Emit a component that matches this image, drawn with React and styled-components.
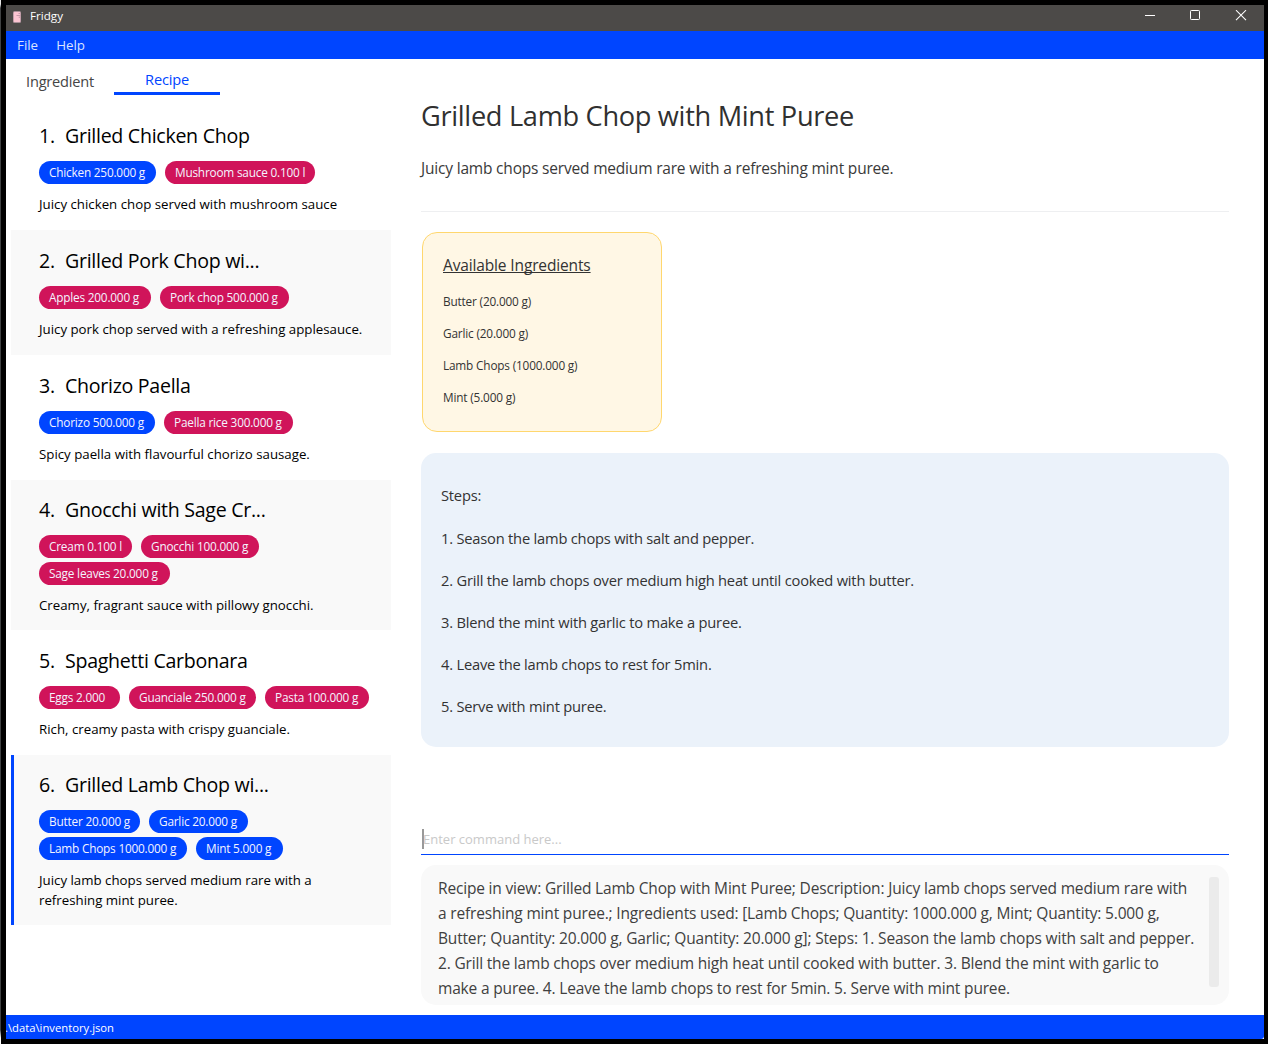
import React from 'react';
import styled, { createGlobalStyle, css } from 'styled-components';

const BLUE = '#0045ff';
const CRIMSON = '#d0145a';

const GlobalStyle = createGlobalStyle`
  *, *::before, *::after { box-sizing: border-box; }
  body { margin: 0; background: #000; }
  h1, h2, p, ul, ol { margin: 0; padding: 0; font-weight: 400; list-style: none; }
`;

const Desktop = styled.div`
  display: flex;
  width: 1268px;
  height: 1044px;
  padding: 5px 4px 5px 0;
  background: #000;
  overflow: hidden;
  font-family: 'Open Sans', 'Noto Sans', sans-serif;
`;

const EdgeStrip = styled.div`
  width: 1px;
  margin: -5px 5px -5px 0;
  flex: none;
  background: linear-gradient(#e6e6e6 0, #e6e6e6 4px, #3f4142 8px, #3f4142 1030px, #fff 1038px);
`;

const Window = styled.div`
  flex: 1;
  min-width: 0;
  display: flex;
  flex-direction: column;
  background: #fff;
`;

const TitleBar = styled.header`
  display: flex;
  align-items: flex-start;
  height: 26px;
  flex: none;
  padding-left: 7px;
  background: #4c4a48;
`;

const AppIcon = styled.svg`
  width: 8px;
  height: 12px;
  margin-top: 6px;
`;

const AppName = styled.span`
  flex: 1;
  margin-left: 9px;
  font-size: 11.65px;
  line-height: 22px;
  color: #fff;
`;

const Controls = styled.div`
  display: flex;
  gap: 34px;
  padding: 5px 17px 0 0;
`;

const ControlIcon = styled.svg`
  width: 12px;
  height: 12px;
  fill: none;
  stroke: #fff;
  stroke-width: 1;
`;

const MenuBar = styled.nav`
  display: flex;
  gap: 18px;
  height: 28px;
  flex: none;
  padding-left: 11px;
  background: ${BLUE};
`;

const MenuItem = styled.span`
  font-size: 13.35px;
  line-height: 28px;
  color: #d9e3ff;
`;

const Body = styled.main`
  flex: 1;
  min-height: 0;
  display: grid;
  grid-template-columns: 385px 1fr;
`;

const Sidebar = styled.aside`
  padding-left: 5px;
`;

const Tabs = styled.div`
  display: flex;
  height: 46px;
`;

const Tab = styled.div`
  height: 36px;
  font-size: 14.6px;
  letter-spacing: -0.2px;
  color: #454545;
  line-height: 45px;
  width: 103px;
  padding-left: 15px;
  ${({ $active }) => $active && css`
    width: 106px;
    padding-left: 0;
    text-align: center;
    line-height: 41px;
    color: ${BLUE};
    border-bottom: 3px solid ${BLUE};
  `}
`;

const RecipeRow = styled.li`
  width: 380px;
  height: ${({ $height }) => $height}px;
  padding: ${({ $tight }) => ($tight ? 18 : 19)}px 0 0 28px;
  background: ${({ $shaded }) => ($shaded ? '#f9f9f9' : '#fff')};
  ${({ $selected }) => $selected && css`
    padding-left: 25px;
    border-left: 3px solid ${BLUE};
  `}
`;

const RecipeHeading = styled.h2`
  display: flex;
  font-size: 19.6px;
  letter-spacing: -0.29px;
  line-height: 24px;
  color: #000;
  white-space: nowrap;
`;

const RecipeIndex = styled.span`
  width: 26px;
`;

const TagFlow = styled.div`
  display: flex;
  flex-wrap: wrap;
  gap: 4px 9px;
  width: 340px;
  margin-top: 13px;
`;

const Tag = styled.span`
  width: ${({ $width }) => $width}px;
  height: 23px;
  padding-left: 10px;
  border-radius: 12px;
  background: ${({ $owned }) => ($owned ? BLUE : CRIMSON)};
  color: #f4f4ff;
  font-size: 11.8px;
  letter-spacing: -0.2px;
  line-height: 23px;
  white-space: nowrap;
`;

const RecipeBlurb = styled.p`
  width: 330px;
  margin-top: 10px;
  font-size: 13.27px;
  line-height: 20px;
  color: #000;
  white-space: pre-line;
`;

const Detail = styled.section`
  display: flex;
  flex-direction: column;
  padding: 37px 35px 10px 30px;
`;

const DetailTitle = styled.h1`
  font-size: 27.2px;
  letter-spacing: -0.31px;
  line-height: 40px;
  color: #303030;
`;

const DetailText = styled.p`
  margin-top: 20px;
  padding-bottom: 31px;
  border-bottom: 1px solid #eeeff1;
  font-size: 15.5px;
  letter-spacing: -0.19px;
  line-height: 24px;
  color: #3a3a3a;
`;

const IngredientCard = styled.div`
  width: 240px;
  height: 200px;
  margin: 20px 0 0 1px;
  padding: 20px;
  border: 1px solid #ffd76e;
  border-radius: 15px;
  background: #fff7e5;
  color: #333;
`;

const CardTitle = styled.h2`
  margin-bottom: 8px;
  font-size: 15.5px;
  letter-spacing: -0.14px;
  line-height: 24px;
  text-decoration: underline;
  text-decoration-thickness: 1px;
  text-decoration-skip-ink: none;
  text-underline-offset: 1px;
`;

const IngredientItem = styled.li`
  font-size: 11.8px;
  letter-spacing: -0.17px;
  line-height: 32px;
`;

const StepsPanel = styled.div`
  height: 294px;
  margin-top: 21px;
  padding: 21px 20px;
  border-radius: 15px;
  background: #ebf2fa;
  color: #333;
  font-size: 14.7px;
  letter-spacing: -0.21px;
`;

const StepsTitle = styled.h2`
  font-size: inherit;
  line-height: 43px;
`;

const StepItem = styled.li`
  line-height: 42px;
`;

const CommandBox = styled.div`
  display: flex;
  align-items: center;
  height: 31px;
  margin-top: auto;
  padding-left: 1px;
  border-bottom: 1px solid ${BLUE};
`;

const Caret = styled.span`
  width: 2px;
  height: 20px;
  margin-right: -1px;
  background: #999;
`;

const Placeholder = styled.span`
  font-size: 13px;
  line-height: 20px;
  color: #c9c9c9;
`;

const ResultBox = styled.div`
  display: flex;
  justify-content: space-between;
  height: 140px;
  margin-top: 10px;
  padding: 11px 10px 0 17px;
  border-radius: 15px;
  background: #f9f9f9;
`;

const ResultText = styled.p`
  font-size: 15.5px;
  letter-spacing: -0.175px;
  line-height: 25px;
  color: #404040;
  white-space: pre;
`;

const ScrollThumb = styled.div`
  width: 10px;
  height: 110px;
  margin-top: 1px;
  border-radius: 3px;
  background: #ebebeb;
`;

const StatusBar = styled.footer`
  height: 24px;
  flex: none;
  overflow: hidden;
  background: ${BLUE};
  color: #fff;
  font-size: 11.25px;
  line-height: 25px;
  text-indent: -1px;
  border-bottom-right-radius: 3px;
`;

const recipes = [
  { name: 'Grilled Chicken Chop', height: 125, blurb: 'Juicy chicken chop served with mushroom sauce',
    tags: [['Chicken 250.000 g', 117, true], ['Mushroom sauce 0.100 l', 150]] },
  { name: 'Grilled Pork Chop wi...', height: 125, blurb: 'Juicy pork chop served with a refreshing applesauce.',
    tags: [['Apples 200.000 g', 112], ['Pork chop 500.000 g', 129]] },
  { name: 'Chorizo Paella', height: 125, blurb: 'Spicy paella with flavourful chorizo sausage.',
    tags: [['Chorizo 500.000 g', 116, true], ['Paella rice 300.000 g', 129]] },
  { name: 'Gnocchi with Sage Cr...', height: 150, tight: true, blurb: 'Creamy, fragrant sauce with pillowy gnocchi.',
    tags: [['Cream 0.100 l', 93], ['Gnocchi 100.000 g', 118], ['Sage leaves 20.000 g', 131]] },
  { name: 'Spaghetti Carbonara', height: 125, blurb: 'Rich, creamy pasta with crispy guanciale.',
    tags: [['Eggs 2.000', 81], ['Guanciale 250.000 g', 127], ['Pasta 100.000 g', 104]] },
  { name: 'Grilled Lamb Chop wi...', height: 170, tight: true, selected: true,
    blurb: 'Juicy lamb chops served medium rare with a\nrefreshing mint puree.',
    tags: [['Butter 20.000 g', 101, true], ['Garlic 20.000 g', 99, true], ['Lamb Chops 1000.000 g', 148, true], ['Mint 5.000 g', 87, true]] },
];

const available = ['Butter (20.000 g)', 'Garlic (20.000 g)', 'Lamb Chops (1000.000 g)', 'Mint (5.000 g)'];

const steps = [
  'Season the lamb chops with salt and pepper.',
  'Grill the lamb chops over medium high heat until cooked with butter.',
  'Blend the mint with garlic to make a puree.',
  'Leave the lamb chops to rest for 5min.',
  'Serve with mint puree.',
];

const result = [
  'Recipe in view: Grilled Lamb Chop with Mint Puree; Description: Juicy lamb chops served medium rare with',
  'a refreshing mint puree.; Ingredients used: [Lamb Chops; Quantity: 1000.000 g, Mint; Quantity: 5.000 g,',
  'Butter; Quantity: 20.000 g, Garlic; Quantity: 20.000 g]; Steps: 1. Season the lamb chops with salt and pepper.',
  '2. Grill the lamb chops over medium high heat until cooked with butter. 3. Blend the mint with garlic to',
  'make a puree. 4. Leave the lamb chops to rest for 5min. 5. Serve with mint puree.',
].join('\n');

function FridgeIcon() {
  return (
    <AppIcon viewBox="0 0 8 12">
      <rect x="0" y="0" width="8" height="12" rx="1.5" fill="#a98f98" />
      <rect x="0.7" y="1" width="6.6" height="10" rx="0.8" fill="#fbc4d2" />
      <path d="M3.5 4.5h3.8M5.5 2.5h1.5M6.3 5.5v1.5" stroke="#b98fa0" strokeWidth="0.8" fill="none" />
    </AppIcon>
  );
}

function WindowControls() {
  return (
    <Controls>
      <ControlIcon viewBox="0 0 12 12"><path d="M2 5.5h10" /></ControlIcon>
      <ControlIcon viewBox="0 0 12 12"><rect x="1.5" y="0.5" width="9" height="9" rx="0.8" /></ControlIcon>
      <ControlIcon viewBox="0 0 12 12"><path d="M1 0.2l10 10M11 0.2l-10 10" strokeWidth="1.1" /></ControlIcon>
    </Controls>
  );
}

function RecipeEntry({ recipe, index }) {
  return (
    <RecipeRow $height={recipe.height} $tight={recipe.tight} $shaded={index % 2 === 1} $selected={recipe.selected}>
      <RecipeHeading>
        <RecipeIndex>{index + 1}.</RecipeIndex>
        {recipe.name}
      </RecipeHeading>
      <TagFlow>
        {recipe.tags.map(([label, width, owned]) => (
          <Tag key={label} $width={width} $owned={owned}>{label}</Tag>
        ))}
      </TagFlow>
      <RecipeBlurb>{recipe.blurb}</RecipeBlurb>
    </RecipeRow>
  );
}

export default function App() {
  return (
    <Desktop>
      <GlobalStyle />
      <EdgeStrip />
      <Window>
        <TitleBar>
          <FridgeIcon />
          <AppName>Fridgy</AppName>
          <WindowControls />
        </TitleBar>
        <MenuBar>
          <MenuItem>File</MenuItem>
          <MenuItem>Help</MenuItem>
        </MenuBar>
        <Body>
          <Sidebar>
            <Tabs>
              <Tab>Ingredient</Tab>
              <Tab $active>Recipe</Tab>
            </Tabs>
            <ul>
              {recipes.map((recipe, i) => (
                <RecipeEntry key={recipe.name} recipe={recipe} index={i} />
              ))}
            </ul>
          </Sidebar>
          <Detail>
            <DetailTitle>Grilled Lamb Chop with Mint Puree</DetailTitle>
            <DetailText>Juicy lamb chops served medium rare with a refreshing mint puree.</DetailText>
            <IngredientCard>
              <CardTitle>Available Ingredients</CardTitle>
              <ul>
                {available.map((item) => <IngredientItem key={item}>{item}</IngredientItem>)}
              </ul>
            </IngredientCard>
            <StepsPanel>
              <StepsTitle>Steps:</StepsTitle>
              <ol>
                {steps.map((step, i) => <StepItem key={step}>{`${i + 1}. ${step}`}</StepItem>)}
              </ol>
            </StepsPanel>
            <CommandBox>
              <Caret />
              <Placeholder>Enter command here...</Placeholder>
            </CommandBox>
            <ResultBox>
              <ResultText>{result}</ResultText>
              <ScrollThumb />
            </ResultBox>
          </Detail>
        </Body>
        <StatusBar>.\data\inventory.json</StatusBar>
      </Window>
    </Desktop>
  );
}
